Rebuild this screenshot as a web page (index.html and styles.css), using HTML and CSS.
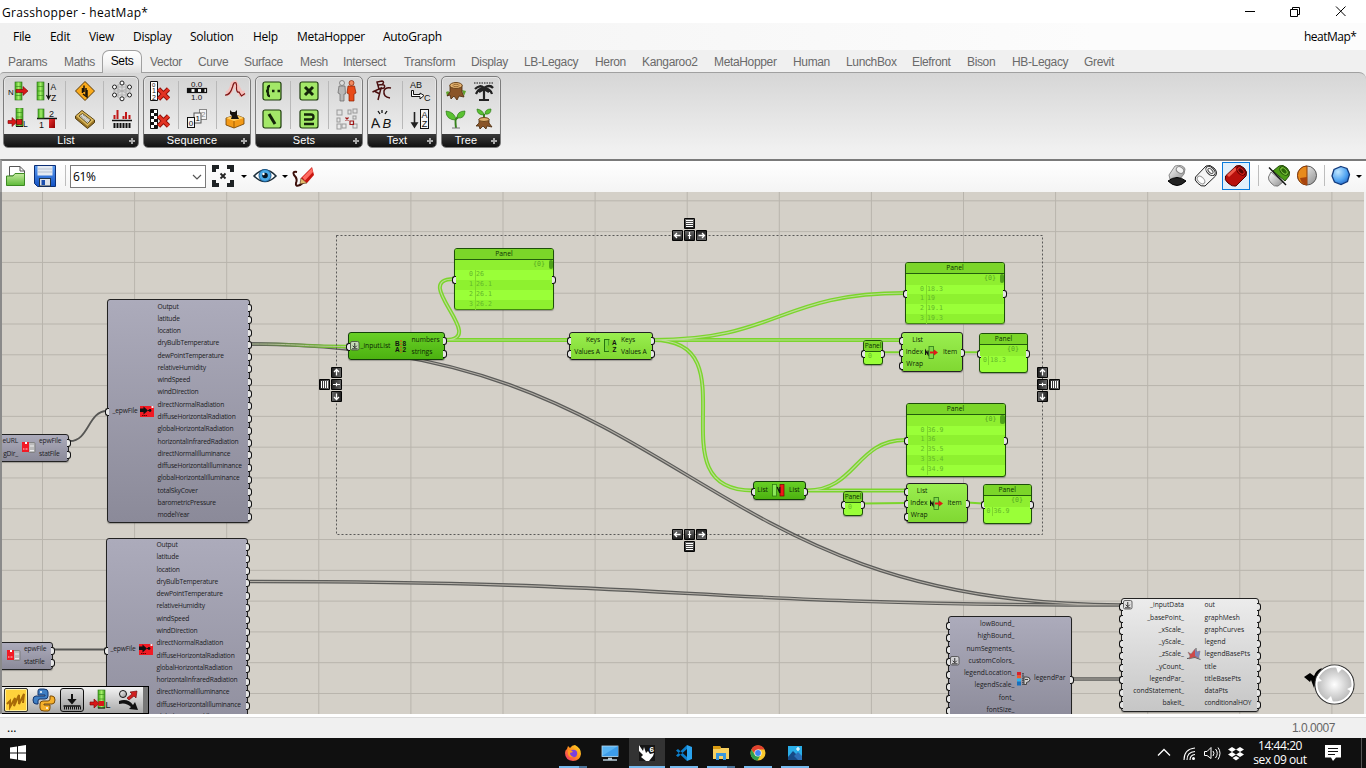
FILE: index.html
```html
<!DOCTYPE html>
<html lang="en">
<head>
<meta charset="utf-8">
<title>Grasshopper - heatMap*</title>
<link rel="stylesheet" href="styles.css">
</head>
<body>
<svg class="defs" width="0" height="0">
  <defs>
    <linearGradient id="gGreen" x1="0" x2="1"><stop offset="0" stop-color="#3fa81c"/><stop offset=".5" stop-color="#a5f06a"/><stop offset="1" stop-color="#3c9c1c"/></linearGradient>
    <linearGradient id="gRed" x1="0" y1="0" x2="1" y2="1"><stop offset="0" stop-color="#f03030"/><stop offset="1" stop-color="#8c0000"/></linearGradient>
    <linearGradient id="gFolder" x1="0" y1="0" x2="0" y2="1"><stop offset="0" stop-color="#c5ea9f"/><stop offset="1" stop-color="#5dba38"/></linearGradient>
    <linearGradient id="gBlue" x1="0" y1="0" x2="0" y2="1"><stop offset="0" stop-color="#5c9cf0"/><stop offset="1" stop-color="#1352c4"/></linearGradient>
    <linearGradient id="gGrey" x1="0" y1="0" x2="1" y2="1"><stop offset="0" stop-color="#fff"/><stop offset="1" stop-color="#8d8d8d"/></linearGradient>
    <linearGradient id="gFox" x1="1" y1="0" x2="0" y2="1"><stop offset="0" stop-color="#ffe226"/><stop offset=".5" stop-color="#ff8a1d"/><stop offset="1" stop-color="#f0247c"/></linearGradient>
    <radialGradient id="gBall" cx=".35" cy=".3" r=".8"><stop offset="0" stop-color="#bfe6ff"/><stop offset=".6" stop-color="#52a5f2"/><stop offset="1" stop-color="#1e60c0"/></radialGradient>
    <radialGradient id="gNav"><stop offset="0" stop-color="#fff"/><stop offset="1" stop-color="#b4b4b4"/></radialGradient>
    <linearGradient id="gKey" x1="0" y1="0" x2="0" y2="1"><stop offset="0" stop-color="#666"/><stop offset="1" stop-color="#222"/></linearGradient>
    <linearGradient id="gWire" x1="251" x2="348" gradientUnits="userSpaceOnUse"><stop offset="0" stop-color="#5c5c5a"/><stop offset="1" stop-color="#7bd52c"/></linearGradient>
    <pattern id="grid" x="42" y="15.6" width="92.1" height="30.79" patternUnits="userSpaceOnUse"><path d="M.5 0V31M0 .5H93" stroke="#b8b4ac" fill="none"/></pattern>
    <g id="key"><rect x="-5.5" y="-5.5" width="11" height="11" rx="1" fill="#050505"/><rect x="-4.5" y="-4.5" width="9" height="9" fill="url(#gKey)"/></g>
    <g id="kLeft"><use href="#key"/><path d="M3 0H-2.5M-.5-2.5L-3 0-.5 2.5" stroke="#fff" stroke-width="1.3" fill="none"/></g>
    <g id="kPlusV"><use href="#key"/><path d="M0-3.500V3.500M-1.7 0H1.7" stroke="#fff" stroke-width="1.2" fill="none"/></g>
    <g id="kBars"><use href="#key"/><path d="M-3.5-3H3.5M-3.5-1H3.5M-3.5 1H3.5M-3.5 3H3.5" stroke="#fff" fill="none"/></g>
    <g id="redx"><path d="M-5-5L5 5M5-5L-5 5" stroke="#8c0d06" stroke-width="4.6"/><path d="M-5-5L5 5M5-5L-5 5" stroke="#e23222" stroke-width="3"/></g>
    <g id="listcol"><rect x="0" y="0" width="7" height="18" fill="url(#gGreen)" stroke="#2d7317" stroke-width=".6"/><path d="M0 4.5H7M0 9H7M0 13.5H7" stroke="#3d8f1e" stroke-width=".7"/></g>
    <g id="epwRed"><rect width="14" height="11" fill="#f21a24"/><path d="M0 2.500H3.500V.500L8 4.500 3.500 8.500V6H0Z" fill="#111"/><path d="M8 4.500H9.500" stroke="#111" stroke-width="1.200"/><circle cx="10" cy="4.500" r="1.400" fill="#111"/><rect x="11.500" y="0" width="2" height="2" fill="#eee"/><path d="M2 9.500H7" stroke="#600" stroke-dasharray="1.500 .500"/></g>
    <g id="epwGrey"><rect x="6.500" y=".5" width="6.500" height="10" rx="1" fill="#bbb" stroke="#777" stroke-width=".8"/><path d="M8 4H12M8 8.500H12" stroke="#eee"/><rect width="7" height="10" fill="#f21a24"/><rect x="3" y="0" width="2" height="2" fill="#fff"/><path d="M1 7H6" stroke="#fff" stroke-width=".8" stroke-dasharray="1 .500"/></g>
    <g id="graft"><rect x=".5" y=".5" width="8.5" height="8.5" rx="1.5" fill="#ddd" fill-opacity=".8" stroke="#444" stroke-width=".8"/><path d="M4.75 2V6.5M2.7 4.7L4.75 6.8 6.8 4.7M2 7.8H7.5" fill="none" stroke="#222" stroke-width=".9"/></g>
    <g id="nodeItem"><rect x="4" y=".5" width="4.500" height="12" fill="#7fd84a" stroke="#2f7a18" stroke-width=".8"/><path d="M.5 9V4.500L3 8.500V4.500" fill="none" stroke="#111" stroke-width="1.200"/><path d="M5 5.500H9V3.500L13 6.500 9 9.500V7.500H5Z" fill="#e01818"/></g>
  </defs>
</svg>

<header class="titlebar">
  <span>Grasshopper - heatMap*</span>
  <svg class="caption" width="110" height="22" viewBox="0 0 110 22" fill="none" stroke="#000"><path d="M5 10.500H15M50.500 8.500H57.500V15.500H50.500ZM52.500 8V6.500H59.500V13.500H58M96 5.500L105.500 15M105.500 5.500L96 15"/></svg>
</header>

<nav class="menubar">
  <span>File</span><span>Edit</span><span>View</span><span>Display</span><span>Solution</span><span>Help</span><span>MetaHopper</span><span>AutoGraph</span><span class="doc">heatMap*</span>
</nav>

<nav class="tabs">
  <span>Params</span><span>Maths</span><span class="active">Sets</span><span>Vector</span><span>Curve</span><span>Surface</span><span>Mesh</span><span>Intersect</span><span>Transform</span><span>Display</span><span>LB-Legacy</span><span>Heron</span><span>Kangaroo2</span><span>MetaHopper</span><span>Human</span><span>LunchBox</span><span>Elefront</span><span>Bison</span><span>HB-Legacy</span><span>Grevit</span>
</nav>

<section class="ribbon">
  <div class="group list">
    <div class="tools">
      <svg viewBox="0 0 22 22"><use href="#listcol" x="8" y="2"/><text x="1" y="15" font-size="8">N</text><path d="M9 9.500H16V6.500L21 11 16 15.500V12.500H9Z" fill="#d81818" stroke="#700" stroke-width=".6"/></svg>
      <svg viewBox="0 0 22 22"><use href="#listcol" x="1" y="2"/><path d="M12.500 3V18M10.500 15L12.500 19 14.500 15" stroke="#111" fill="none" stroke-width="1.200"/><text x="14.500" y="9.500" font-size="8.500">A</text><text x="15" y="20.500" font-size="8.500">Z</text></svg>
      <svg viewBox="0 0 22 22"><path d="M11 1.500L20.500 11 11 20.500 1.500 11Z" fill="#fbab1c" stroke="#5a3a08" stroke-linejoin="round"/><path d="M10 5.500V12M8.500 8V13M9 14L13 17V10M12 8V15" stroke="#1a1206" stroke-width="1.500" fill="none"/></svg>
      <svg viewBox="0 0 22 22" class="net"><path d="M11 3L19 7V15L11 19 3 15V7ZM3 7L19 15M3 15L19 7M11 3V19M3 7H19M3 15H19M7 5V17M15 5V17M3 11H19"/><circle cx="11" cy="3" r="2"/><circle cx="18.500" cy="7" r="2"/><circle cx="18.500" cy="15" r="2"/><circle cx="11" cy="18.800" r="2"/><circle cx="3.500" cy="15" r="2"/><circle cx="3.500" cy="7" r="2"/></svg>
      <svg viewBox="0 0 22 22"><use href="#listcol" x="9" y="0"/><path d="M1 12.500H5V9.500L10 14 5 18.500V15.500H1Z" fill="#d81818" stroke="#700" stroke-width=".6"/><rect x="9.500" y="11.500" width="5.500" height="5" fill="#d81818" stroke="#500" stroke-width=".6"/><path d="M9 18.500H16" stroke="#111"/><text x="16" y="19" font-size="8.500">L</text></svg>
      <svg viewBox="0 0 22 22"><path d="M1 10.500H21" stroke="#111" stroke-width="1.400"/><rect x="2" y="1" width="6" height="9" fill="url(#gGreen)" stroke="#2d7317" stroke-width=".6"/><rect x="13" y="11" width="6" height="9" fill="url(#gRed)"/><text x="13" y="9" font-size="9">2</text><text x="3" y="20" font-size="9">1</text></svg>
      <svg viewBox="0 0 22 22"><path d="M1.500 8L8 2.500 20.500 12V14.500L13.500 20.500 1.500 10.500Z" fill="#9a7526" stroke="#4d380d"/><path d="M2 8L8 3 20 12 13.500 18Z" fill="#d8b65a"/><path d="M5 8L8.500 5.500 17 12 13.500 15.500Z" fill="#d9d9d0" stroke="#4d380d" stroke-width=".8"/><path d="M7 8L14 14M9 7L16 13" stroke="#888" stroke-dasharray="1 1"/></svg>
      <svg viewBox="0 0 22 22"><path d="M3.500 11V7M6.500 11V2M12.500 11V8M15 11V4M18.500 11V7" stroke="#c01818" stroke-width="2"/><path d="M1 12.500H21" stroke="#111" stroke-width="1.300"/><path d="M2.500 17.500H20" stroke="#111" stroke-width="5" stroke-dasharray="2 1"/></svg>
    </div>
    <h3>List</h3>
  </div>
  <div class="group sequence">
    <div class="tools">
      <svg viewBox="0 0 22 22"><path d="M1.500 1.500H8.500V20.500H1.500Z" fill="#fff" stroke="#111"/><text x="3" y="6.500" font-size="6">0</text><text x="3" y="13" font-size="7">1</text><text x="3" y="19.500" font-size="7">2</text><use href="#redx" x="14.500" y="14"/></svg>
      <svg viewBox="0 0 22 22"><text x="5" y="6.500" font-size="8">0.0</text><text x="5" y="20" font-size="8">1.0</text><rect x="1.500" y="8.500" width="19" height="4" fill="#fff" stroke="#111" stroke-width="1.200"/><path d="M2 10.500H20" stroke="#111" stroke-width="3" stroke-dasharray="3.500 3"/></svg>
      <svg viewBox="0 0 22 22"><path d="M2 14Q7 13 9 4L11 3 17 14 21 13" stroke="#f4c0bc" stroke-width="5" fill="none"/><path d="M1 15Q6 15.500 8.500 7Q10 1 12 3Q13 5 12.500 9Q13 13 15 12L17.500 16 21 13.500" stroke="#7c1414" stroke-width="1.200" fill="none"/></svg>
      <svg viewBox="0 0 22 22"><path d="M1.500 1.500H8.500V20.500H1.500Z" fill="#fff" stroke="#111"/><path d="M3.500 2V20" stroke="#111" stroke-width="3" stroke-dasharray="3 3"/><path d="M6.500 5V20" stroke="#111" stroke-width="3" stroke-dasharray="3 3"/><use href="#redx" x="14.500" y="13"/></svg>
      <svg viewBox="0 0 22 22"><g fill="#f4f4f4" stroke="#111"><rect x="13.500" y="1.500" width="7" height="10" stroke="#888"/><rect x="8" y="5" width="7" height="10" stroke="#555"/><rect x="1.500" y="9.500" width="7" height="10"/></g><text x="15" y="9" font-size="8" class="dim">2</text><text x="9.500" y="13" font-size="8">1</text><text x="2.800" y="18" font-size="8">0</text></svg>
      <svg viewBox="0 0 22 22"><path d="M2 10L12 7 20 10V16L10 20 2 17Z" fill="#f39a18" stroke="#6a3c00" stroke-width=".8"/><path d="M2 10L10 13 20 10 12 7Z" fill="#ffce62"/><path d="M10 13V20" stroke="#a35e00"/><path d="M6 2L8 4H11L13 2 13 7 15 11 7 11 8 8 6 6Z" fill="#16120e"/></svg>
    </div>
    <h3>Sequence</h3>
  </div>
  <div class="group sets">
    <div class="tools">
      <svg viewBox="0 0 22 22" class="tile"><rect x="2" y="2" width="18" height="18" rx="2"/><path d="M9 6Q6.500 6 7 9Q7 11 5 11Q7 11 7 13Q6.500 16 9 16"/><path d="M11 11H13.500M16.500 11H19" /></svg>
      <svg viewBox="0 0 22 22" class="tile"><rect x="2" y="2" width="18" height="18" rx="2"/><path d="M7 7L15 15M15 7L7 15" class="fat"/></svg>
      <svg viewBox="0 0 22 22"><g stroke-width=".7"><path d="M3 6H9L9.500 14 8 14V21H4V14L2 13Z" fill="#b8b8b8" stroke="#666"/><circle cx="6" cy="3" r="2.500" fill="#ddd" stroke="#666"/><path d="M12 6H18.500L20 13 18 14V21H13V14L11 13Z" fill="#e84a18" stroke="#8a2000"/><circle cx="15.500" cy="3" r="2.500" fill="#f08a60" stroke="#8a2000"/></g></svg>
      <svg viewBox="0 0 22 22" class="tile"><rect x="2" y="2" width="18" height="18" rx="2"/><path d="M8 6L14 16" class="fat"/></svg>
      <svg viewBox="0 0 22 22" class="tile"><rect x="2" y="2" width="18" height="18" rx="2"/><path d="M6 6.500H13Q15.500 6.500 15.500 9Q15.500 11.500 13 11.500H6M6 16H16"/></svg>
      <svg viewBox="0 0 22 22" class="boxes"><rect x="1" y="2" width="5" height="5"/><rect x="12" y="2" width="3" height="4"/><rect x="17" y="1" width="4" height="4"/><rect x="1" y="10" width="3" height="4"/><rect x="17" y="8" width="3" height="3"/><rect x="1" y="16" width="4" height="5"/><rect x="6" y="16" width="4" height="4"/><rect x="17" y="16" width="4" height="4"/><path d="M9.500 9.500L12.500 12.500M12.500 9.500L9.500 12.500M14 13H17.500V16.500H14Z" stroke="#a01818" stroke-width="1.200"/></svg>
    </div>
    <h3>Sets</h3>
  </div>
  <div class="group text">
    <div class="tools">
      <svg viewBox="0 0 22 22"><g stroke="#4a1010" stroke-width="1.500" fill="none"><path d="M8 9L6 2L11 1Q14 2 11 4.500L7.500 5M11 4.500Q15 5 13 8L8 9"/><path d="M1.500 12L10 8 7 20M4 11.500L9 14"/><path d="M20 8Q14 7 13 11Q12 17 19 18"/></g></svg>
      <svg viewBox="0 0 22 22"><text x="1" y="8" font-size="9">AB</text><path d="M2.500 10.500V16.500H11V19L15 15.500 11 13V14.500H4.500V10.500Z" fill="#fff" stroke="#111"/><text x="15" y="20.500" font-size="9">C</text></svg>
      <svg viewBox="0 0 22 22"><text x="0" y="20" font-size="14" transform="rotate(-4 3 20)">A</text><text x="11.500" y="20" font-size="13" font-style="italic">B</text><path d="M7 3L9 6M11 2V5M16 3L14 6" stroke="#111" stroke-width="1.300"/></svg>
      <svg viewBox="0 0 22 22"><path d="M5.500 4V18M3 15L5.500 19 8 15Z" stroke="#222" stroke-width="1.600"/><rect x="11.500" y="1.500" width="8" height="19" fill="#f6f6f6" stroke="#111"/><text x="12.500" y="10" font-size="9">A</text><text x="12.800" y="19" font-size="9">Z</text></svg>
    </div>
    <h3>Text</h3>
  </div>
  <div class="group tree">
    <div class="tools">
      <svg viewBox="0 0 22 22"><path d="M1 12Q4 10 5 13L2 16ZM17 10L21 11 19 16Z" fill="#5fa32c"/><path d="M5 5V12L2 16 5 15 6 19 9 16 12 20 14 16 19 17 17 12V5Z" fill="#8a5528" stroke="#4a2b0c" stroke-width=".8"/><ellipse cx="11" cy="5.500" rx="6.200" ry="3" fill="#e0b06e" stroke="#6d451b"/><ellipse cx="11" cy="5.500" rx="3" ry="1.200" fill="none" stroke="#9c6d35"/></svg>
      <svg viewBox="0 0 22 22"><path d="M1 3H21" stroke="#111" stroke-dasharray="1.500 1"/><path d="M11 7V19M6 20H16M2 9Q7 4 11 8Q17 4 20 8M3 14Q6 7 11 9Q17 8 19 14M6 12L11 9 16 12" stroke="#222" stroke-width="2.200" fill="none"/></svg>
      <svg viewBox="0 0 22 22"><path d="M11 20Q10 12 11 11L16 6" stroke="#37831c" stroke-width="2" fill="none"/><path d="M11 12Q1 12 1 3Q10 4 11 12ZM12 10Q12 3 20 3Q20 11 12 10Z" fill="#5ac232" stroke="#2c7a15" stroke-width=".7"/><path d="M7 20H15" stroke="#777"/></svg>
      <svg viewBox="0 0 22 22"><path d="M11 12V6" stroke="#37831c" stroke-width="2"/><path d="M11 7Q4 7 4 1Q10 2 11 7ZM12 6Q12 1 18 1Q18 7 12 6Z" fill="#5ac232" stroke="#2c7a15" stroke-width=".7"/><path d="M6 11V15L3 18 6 18 7 21 10 18 13 21 14 18 19 19 16 15V11Z" fill="#8a5528" stroke="#4a2b0c" stroke-width=".8"/><ellipse cx="11" cy="11.500" rx="5" ry="2" fill="#e0b06e" stroke="#6d451b"/></svg>
    </div>
    <h3>Tree</h3>
  </div>
</section>

<section class="toolbar">
  <svg class="open" width="24" height="26" viewBox="0 0 24 26"><path d="M6.500 13V3.500H17L21.500 8V13Z" fill="#fff" stroke="#555"/><path d="M17 3.500V8H21.500" fill="none" stroke="#555"/><path d="M3.500 22.500V13H10L12 10.500H21.500V22.500Z" fill="url(#gFolder)" stroke="#3c8a22"/></svg>
  <svg width="30" height="26" viewBox="0 0 30 26"><path d="M4.500 2.500H25.500V23.500H7.500L4.500 20.500Z" fill="url(#gBlue)" stroke="#0c2e74"/><rect x="7.500" y="3" width="15" height="9.500" fill="#e4eaf2"/><path d="M8 6H22M8 9H22" stroke="#b6c0cf"/><rect x="9.500" y="15.500" width="11" height="7.500" fill="#dfe3ea" stroke="#234"/><rect x="11.500" y="17" width="3.500" height="5" fill="#1c4fae"/></svg>
  <i class="sep"></i>
  <div class="combo"><span>61%</span><svg width="12" height="8" viewBox="0 0 12 8"><path d="M2 2L6 6 10 2" fill="none" stroke="#555" stroke-width="1.200"/></svg></div>
  <svg width="26" height="26" viewBox="0 0 26 26"><path d="M4 9V4H9M17 4H22V9M22 17V22H17M9 22H4V17" stroke="#1e2224" stroke-width="4" fill="none"/><path d="M10.500 10.500L15.500 15.500M15.500 10.500L10.500 15.500" stroke="#222" stroke-width="1.800"/></svg>
  <i class="drop"></i>
  <svg width="28" height="26" viewBox="0 0 28 26"><path d="M3 13Q14 1 25 13Q14 24 3 13Z" fill="#fff" stroke="#1c2e3a" stroke-width="1.600"/><circle cx="14" cy="12.500" r="6" fill="#4aa9e6" stroke="#185a90"/><circle cx="14" cy="12.500" r="2.800" fill="#06131f"/><circle cx="12.500" cy="11" r="1.200" fill="#fff"/></svg>
  <i class="drop narrow"></i>
  <svg width="30" height="26" viewBox="0 0 30 26"><path d="M6 9Q1 8 3 12Q7 16 5 20Q4 24 9 22L13 19" fill="none" stroke="#3c0f0a" stroke-width="2"/><path d="M9 21L10 15 16 20Z" fill="#e3bb6c" stroke="#4b2a10" stroke-width=".6"/><path d="M10 15L21 4 23 12 16 20Z" fill="#c8150f"/><path d="M11.500 14.500L21 5 22 9 14 17.500Z" fill="#ff6a60"/></svg>
  <div class="right">
    <svg width="26" height="26" viewBox="0 0 26 26"><path d="M5 12L11 3Q19 1 21 6L20 11 15 17 6 16Z" fill="url(#gGrey)" stroke="#888"/><ellipse cx="16" cy="7" rx="4" ry="3" transform="rotate(35 16 7)" fill="#f4f4f4" stroke="#888"/><path d="M4 18Q13 11 22 18Q13 27 4 18Z" fill="#222" stroke="#000"/></svg>
    <svg width="28" height="26" viewBox="0 0 28 26"><path d="M3.500 14L14 3Q18 1 22 5Q26 9 23.500 13L13 23Q9 24 5.500 20Q2 17 3.500 14Z" fill="#f6f6f6" stroke="#222"/><ellipse cx="18.500" cy="8" rx="3.500" ry="5.500" transform="rotate(-45 18.500 8)" fill="#fff" stroke="#333"/><ellipse cx="18.500" cy="8" rx="1.700" ry="3.200" transform="rotate(-45 18.500 8)" fill="none" stroke="#555"/><ellipse cx="9" cy="17" rx="2.800" ry="4.500" transform="rotate(-45 9 17)" fill="#fff" stroke="#999"/></svg>
    <span class="on"><svg width="28" height="26" viewBox="0 0 28 26"><path d="M3.500 13L14 3Q18 1 22 5Q26 9 24 13L14 23Q10 24 6 20Q2 17 3.500 13Z" fill="#b8100c" stroke="#500"/><path d="M6 13L14 5.500" stroke="#ee5a4a" stroke-width="3"/><ellipse cx="19" cy="8" rx="3.200" ry="5" transform="rotate(-45 19 8)" fill="#d8201a" stroke="#500"/><ellipse cx="19" cy="8" rx="1.800" ry="3.200" transform="rotate(-45 19 8)" fill="#5c0402"/></svg></span>
    <i class="sep"></i>
    <svg width="28" height="26" viewBox="0 0 28 26"><path d="M6 9L3.500 14Q3 17 6 20Q9 24 13 23L18 19Z" fill="url(#gGrey)" stroke="#777"/><path d="M8 8L14 3Q18 1 22 5Q26 9 24 13L20 18Z" fill="#4c9c16" stroke="#234b0a"/><ellipse cx="19" cy="8" rx="3.200" ry="5" transform="rotate(-45 19 8)" fill="#7cc83c" stroke="#234b0a"/><ellipse cx="19" cy="8" rx="1.800" ry="3.200" transform="rotate(-45 19 8)" fill="#2c660a"/><path d="M4 4.500L21 22" stroke="#111" stroke-width="1.400"/></svg>
    <svg width="28" height="26" viewBox="0 0 28 26"><circle cx="14" cy="12.500" r="9.500" fill="url(#gGrey)" stroke="#555"/><path d="M14 3A9.500 9.500 0 0 0 14 22Z" fill="#e88a1c" stroke="#8a3a08"/><path d="M7 15Q8 21 14 22V14Z" fill="#a8440c"/></svg>
    <i class="sep"></i>
    <svg width="28" height="26" viewBox="0 0 28 26"><path d="M14 3.500L20 5.500 22.500 11.500 20.500 18.500 14 21.500 7.500 19 5 13 7 6.500Z" fill="url(#gBall)" stroke="#123a7c" stroke-width="1.300"/></svg>
    <i class="drop"></i>
  </div>
</section>

<main class="canvas">
  <div class="world">
    <svg class="wires" width="1366" height="768" viewBox="0 0 1366 768">
      <rect width="1366" height="768" fill="url(#grid)" shape-rendering="crispEdges"/>
      <g class="wire dark">
        <path d="M251 344C686 344 686 605 1121 605M250 581.500C685 581.500 685 605 1121 605M1073 679H1121"/>
        <path class="core" d="M251 344C686 344 686 605 1121 605M250 581.500C685 581.500 685 605 1121 605M1073 679H1121"/>
      </g>
      <path d="M70 441C89 441 88 411 107 411M54 649.500H107" class="single"/>
      <path d="M251 344C300 344 300 346.500 349 346.500" stroke="url(#gWire)" stroke-width="3.500" fill="none"/>
      <path d="M251 344C300 344 300 346.500 349 346.500" stroke="#b6c49a" stroke-width="1" fill="none"/>
      <g class="wire green">
        <path d="M445 340C490 340 409 279 454 279M445 340H569M653 340C779 340 779 293 905 293M653 340H901M653 340C755 340 651 490.500 753 490.500M807 490.500C856 490.500 856 440 905 440M807 490.500H905"/>
        <path class="core" d="M445 340C490 340 409 279 454 279M445 340H569M653 340C779 340 779 293 905 293M653 340H901M653 340C755 340 651 490.500 753 490.500M807 490.500C856 490.500 856 440 905 440M807 490.500H905"/>
        <path class="one" d="M864 503.500L905 503M884 352.300H901M963 352.300H979M967 502.500L983 503.500"/>
      </g>
    </svg>

    <article class="node grey n-epw1"><ul class="ins"><li>_epwFile</li></ul><svg class="ico" width="14" height="11"><use href="#epwRed"/></svg><ul class="outs"><li>Output</li><li>latitude</li><li>location</li><li>dryBulbTemperature</li><li>dewPointTemperature</li><li>relativeHumidity</li><li>windSpeed</li><li>windDirection</li><li>directNormalRadiation</li><li>diffuseHorizontalRadiation</li><li>globalHorizontalRadiation</li><li>horizontalInfraredRadiation</li><li>directNormalIlluminance</li><li>diffuseHorizontalIlluminance</li><li>globalHorizontalIlluminance</li><li>totalSkyCover</li><li>barometricPressure</li><li>modelYear</li></ul></article>
    <article class="node grey n-epw2"><ul class="ins"><li>_epwFile</li></ul><svg class="ico" width="14" height="11"><use href="#epwRed"/></svg><ul class="outs"><li>Output</li><li>latitude</li><li>location</li><li>dryBulbTemperature</li><li>dewPointTemperature</li><li>relativeHumidity</li><li>windSpeed</li><li>windDirection</li><li>directNormalRadiation</li><li>diffuseHorizontalRadiation</li><li>globalHorizontalRadiation</li><li>horizontalInfraredRadiation</li><li>directNormalIlluminance</li><li>diffuseHorizontalIlluminance</li><li>globalHorizontalIlluminance</li><li>totalSkyCover</li><li>barometricPressure</li><li>modelYear</li></ul></article>
    <article class="node grey n-url1"><ul class="ins"><li>eURL</li><li>gDir_</li></ul><svg class="ico" width="14" height="11"><use href="#epwGrey"/></svg><ul class="outs"><li>epwFile</li><li>statFile</li></ul></article>
    <article class="node grey n-url2"><ul class="ins"><li></li><li></li></ul><svg class="ico" width="14" height="11"><use href="#epwGrey"/></svg><ul class="outs"><li>epwFile</li><li>statFile</li></ul></article>
    <article class="node legend n-legend"><ul class="ins"><li>lowBound_</li><li>highBound_</li><li>numSegments_</li><li>customColors_<svg class="graft" width="10" height="10"><use href="#graft"/></svg></li><li>legendLocation_</li><li>legendScale_</li><li>font_</li><li>fontSize_</li></ul><svg class="ico" width="14" height="14"><path d="M0 0H4V3.500H0Z" fill="#d8202c"/><path d="M0 3.500H4V6.500H0Z" fill="#f05a28"/><path d="M0 6.500H4V9.500H0Z" fill="#2ab4f0"/><path d="M0 9.500H4V13.500H0Z" fill="#1470c0"/><path d="M6 1V13" stroke="#333" stroke-width="1.300" stroke-dasharray="1.500 .700"/><path d="M7 5H10Q13 5 13 7.500Q13 10 9.500 10.500V12.500H7Z" stroke="#444" fill="#ccc"/><path d="M8 7.500H11" stroke="#444"/></svg><ul class="outs"><li>legendPar</li></ul></article>
    <article class="node white n-graph"><ul class="ins"><li>_inputData<svg class="graft" width="10" height="10"><use href="#graft"/></svg></li><li>_basePoint_</li><li>_xScale_</li><li>_yScale_</li><li>_zScale_</li><li>_yCount_</li><li>legendPar_</li><li>condStatement_</li><li>bakeIt_</li></ul><svg class="ico" width="14" height="13"><path d="M0 10.500L8 9.500 13.500 11.500M9 0V8" stroke="#555" fill="none"/><path d="M1 4L4 6 8 1 10 4 13 3 12 8 12 10 7 9 2 11 3 8Z" fill="#d04848" stroke="#777" stroke-width=".5"/><path d="M8 1L10 4 13 3 12 8 12 10 8 8Z" fill="#7c86b8"/></svg><ul class="outs"><li>out</li><li>graphMesh</li><li>graphCurves</li><li>legend</li><li>legendBasePts</li><li>title</li><li>titleBasePts</li><li>dataPts</li><li>conditionalHOY</li></ul></article>
    <article class="node deep n-input"><ul class="ins"><li>_inputList<svg class="graft" width="10" height="10"><use href="#graft"/></svg></li></ul><svg class="ico bold" width="13" height="13"><text x="0" y="5.800" font-size="6.500">B</text><text x="7.500" y="5.800" font-size="6.500">8</text><text x="0" y="12" font-size="6.500">A</text><text x="7.500" y="12" font-size="6.500">2</text><path d="M6 0V13" stroke="#e04a10" stroke-dasharray="2 1"/></svg><ul class="outs"><li>numbers</li><li>strings</li></ul></article>
    <article class="node green n-sort"><ul class="ins"><li>Keys</li><li>Values A</li></ul><svg class="ico bold" width="13" height="14"><rect x=".5" y=".5" width="4.500" height="12" fill="#79dc42" stroke="#28730e"/><path d="M7 1V10" stroke="#113c06"/><path d="M5 8.500H9L7 12Z" fill="#111"/><text x="8" y="6" font-size="6.500">A</text><text x="8.500" y="13" font-size="6.500">Z</text></svg><ul class="outs"><li>Keys</li><li>Values A</li></ul></article>
    <article class="node green n-item1"><ul class="ins"><li>List</li><li>Index</li><li>Wrap</li></ul><svg class="ico" width="13" height="13"><use href="#nodeItem"/></svg><ul class="outs"><li>Item</li></ul></article>
    <article class="node green n-item2"><ul class="ins"><li>List</li><li>Index</li><li>Wrap</li></ul><svg class="ico" width="13" height="13"><use href="#nodeItem"/></svg><ul class="outs"><li>Item</li></ul></article>
    <article class="node deep n-rev"><ul class="ins"><li>List</li></ul><svg class="ico" width="13" height="13"><rect x=".5" y=".5" width="4" height="11.500" fill="#8be858" stroke="#28730e" stroke-width=".7"/><rect x="8" y=".5" width="4" height="11.500" fill="#f01818" stroke="#700" stroke-width=".7"/><path d="M5.200 3L7.800 9V3" fill="none" stroke="#111" stroke-width="1.200"/></svg><ul class="outs"><li>List</li></ul></article>

    <article class="panel p-1"><h4>Panel</h4><div class="path">{0}</div><ol><li><b>0</b>26</li><li><b>1</b>26.1</li><li><b>2</b>26.1</li><li><b>3</b>26.2</li></ol></article>
    <article class="panel p-2"><h4>Panel</h4><div class="path">{0}</div><ol><li><b>0</b>18.3</li><li><b>1</b>19</li><li><b>2</b>19.1</li><li><b>3</b>19.3</li></ol></article>
    <article class="panel p-3"><h4>Panel</h4><div class="path">{0}</div><ol><li><b>0</b>36.9</li><li><b>1</b>36</li><li><b>2</b>35.5</li><li><b>3</b>35.4</li><li><b>4</b>34.9</li></ol></article>
    <article class="panel short p-4"><h4>Panel</h4><div class="path">{0}</div><ol><li><b>0</b>18.3</li></ol></article>
    <article class="panel short p-5"><h4>Panel</h4><div class="path">{0}</div><ol><li><b>0</b>36.9</li></ol></article>
    <article class="panel mini p-6"><h4>Panel</h4><p>0</p></article>
    <article class="panel mini p-7"><h4>Panel</h4><p>0</p></article>

    <svg class="overlay" width="1366" height="768" viewBox="0 0 1366 768">
      <rect x="336.500" y="235.500" width="706" height="299" fill="none" stroke="#444" stroke-width="1" stroke-dasharray="2 2" stroke-opacity=".85"/>
      <use href="#kBars" x="689.500" y="223.500"/><use href="#kLeft" x="677.500" y="235.500"/><use href="#kPlusV" x="689.500" y="235.500"/><use href="#kLeft" transform="translate(701.500 235.500) rotate(180)"/>
      <use href="#kBars" x="689.500" y="546.500"/><use href="#kLeft" x="677.500" y="534.500"/><use href="#kPlusV" x="689.500" y="534.500"/><use href="#kLeft" transform="translate(701.500 534.500) rotate(180)"/>
      <use href="#kLeft" transform="translate(336.500 372.500) rotate(90)"/><use href="#kPlusV" transform="translate(336.500 384.500) rotate(90)"/><use href="#kLeft" transform="translate(336.500 396.500) rotate(-90)"/><use href="#kBars" transform="translate(324.500 384.500) rotate(90)"/>
      <use href="#kLeft" transform="translate(1042.500 372.500) rotate(90)"/><use href="#kPlusV" transform="translate(1042.500 384.500) rotate(90)"/><use href="#kLeft" transform="translate(1042.500 396.500) rotate(-90)"/><use href="#kBars" transform="translate(1054.500 384.500) rotate(90)"/>
      <g><path d="M1304 677L1310 673 1314 676Q1316 670 1322 668L1318 676 1314 688 1311 680 1310 682Z" fill="#000"/><circle cx="1334.500" cy="684.500" r="19.500" fill="url(#gNav)" stroke="#333" stroke-width="1.200"/><circle cx="1334.500" cy="684.500" r="18" fill="none" stroke="#fff" stroke-width="2"/><path d="M1336 667L1342 669 1338 673ZM1353 686L1352 692 1347 689ZM1333 702L1327 700 1331 696ZM1316 682L1317 676 1322 681Z" fill="#fff"/></g>
    </svg>

    <div class="mru">
      <span class="yellow"><svg width="22" height="22"><path d="M2 15L5 12 5 18 10 9 9 17 14 6 14 15 19 5 18 14" fill="none" stroke="#a86a08" stroke-width="2"/></svg></span>
      <span><svg width="24" height="24"><path d="M12 1H8Q6 1 6 3V7H13V8H4Q1 8 1 12Q1 16 4 16H6V13Q6 11 8 11H13Q16 11 16 8V4Q16 1 12 1Z" fill="#3f7fc4" stroke="#14346a"/><path d="M12 23H16Q18 23 18 20V17H12V16H20Q23 16 23 12Q23 8 20 8H18V11Q18 13 16 13H11Q8 13 8 16V20Q8 23 12 23Z" fill="#f6b12c" stroke="#7a4c08"/><circle cx="9" cy="4" r="1" fill="#fff"/><circle cx="15" cy="20" r="1" fill="#fff"/></svg></span>
      <span class="press"><svg width="22" height="22"><path d="M11 5V13M8.500 11L11 14 13.500 11Z" stroke="#111" stroke-width="2"/><path d="M2.500 17H19.500" stroke="#111" stroke-width="1.500"/><path d="M3 19H20" stroke="#111" stroke-width="3" stroke-dasharray="1 1"/></svg></span>
      <span><svg width="24" height="24"><use href="#listcol" x="10" y="2"/><path d="M2 14H6V11L11 15.500 6 20V17H2Z" fill="#d81818" stroke="#700" stroke-width=".6"/><rect x="10.500" y="13" width="5.500" height="5" fill="#d81818"/><path d="M10 20H17" stroke="#111"/><text x="17.500" y="20" font-size="9">L</text></svg></span>
      <span><svg width="24" height="24"><circle cx="7" cy="6" r="3.500" fill="url(#gGrey)" stroke="#111"/><path d="M11 10L16 6 14 4 21 3 20 10 18 8 13 12Z" fill="#d02020" stroke="#600" stroke-width=".6"/><path d="M3 13Q12 10 17 17L19 14 22 22 13 21 15 19Q10 14 3 16Z" fill="#111"/></svg></span>
    </div>
  </div>
</main>

<footer class="status"><span>...</span><span class="ver">1.0.0007</span></footer>

<footer class="taskbar">
  <svg class="start" width="18" height="18" viewBox="0 0 18 18"><path d="M1 3.500L8 2.500V8.500H1ZM9 2.300L17 1V8.500H9ZM1 9.500H8V15.500L1 14.500ZM9 9.500H17V17L9 15.700Z" fill="#fff"/></svg>
  <div class="apps">
    <span class="run two"><svg viewBox="0 0 18 18"><path d="M4 2L6 4Q8 1 11 1Q17 4 17 10Q16 17 9 17Q1 16 1 9Q1 6 3 5Z" fill="url(#gFox)"/><circle cx="9.500" cy="9.500" r="3.700" fill="#7a3fe0"/><path d="M4 6Q8 6 9 8L6 9Q6 12 10 13Q5 14 4 10Z" fill="#ff9a20"/></svg></span>
    <span><svg viewBox="0 0 18 18"><rect x="1" y="2" width="16" height="10.500" fill="#58b4f4" stroke="#b8dcf4" stroke-width=".8"/><path d="M1 12L17 2V12Z" fill="#3c9cea"/><path d="M7 14.500H11M2 16H16" stroke="#b8ccd8" stroke-width="1.500"/></svg></span>
    <span class="run current"><svg viewBox="0 0 18 18"><rect x="1" y="1" width="16" height="16" fill="#151515"/><path d="M1 1L5 7 6 3 8 9 10 7 12 10 16 9 15 12 11 17H8L3 13 5 11 1 7Z" fill="#fff"/><text x="11.500" y="8" font-size="8" class="inv">6</text></svg></span>
    <span class="run"><svg viewBox="0 0 18 18"><path d="M12 1L17 3V15L12 17Z" fill="#2aa3ee"/><path d="M12 1V5L3 13 1 11.500 12 1ZM12 17V13L3 5 1 6.500Z" fill="#0c7fcb"/></svg></span>
    <span class="run two"><svg viewBox="0 0 18 18"><path d="M1 2H8L9 4H17V15H1Z" fill="#f8d060"/><path d="M1 2H8L9 4 8 5H1Z" fill="#d99a10"/><path d="M4 16V9H14V16H11V12H7V16Z" fill="#3a96dc"/></svg></span>
    <span class="run"><svg viewBox="0 0 18 18"><circle cx="9" cy="9" r="7.500" fill="#f8c92e"/><path d="M2.300 5.500A7.500 7.500 0 0 1 15.700 5.500H9L6 10Z" fill="#e2412e"/><path d="M2.300 5.500A7.500 7.500 0 0 0 8.500 16.500L11.500 11H6Z" fill="#2e9e4f"/><circle cx="9" cy="9" r="3.600" fill="#fff"/><circle cx="9" cy="9" r="2.900" fill="#4285f4"/></svg></span>
    <span class="run"><svg viewBox="0 0 18 18"><rect x="2" y="2" width="14" height="14" fill="#2aaee8"/><path d="M2 13L7 7 16 16H2Z" fill="#174a86"/><path d="M8 12L12 8 16 12V16H12Z" fill="#2c6fb8"/><path d="M12 3V7M10 5H14" stroke="#fff" stroke-width="1.200"/></svg></span>
  </div>
  <div class="tray">
    <svg width="90" height="30" viewBox="0 0 90 30" fill="none" stroke="#fff"><path d="M3 17.500L9 11.500 15 17.500" stroke-width="1.300"/><path d="M29 22Q29 11 40 10M32 22Q32 14 40 13.500M35 22Q35 17 40 16.500" stroke-width="1.100"/><circle cx="38.500" cy="20.500" r="1.500" fill="#fff" stroke="none"/><path d="M49.500 13.500H52L56 9.500V20.500L52 17.500H49.500ZM58 13Q60 15 58 18M60.500 11Q64 15 60.500 20M63 9.500Q67 15 63 21.500"/><path d="M77 9L81 11.500 77 14 73 11.500ZM85 9L89 11.500 85 14 81 11.500ZM77 14L81 16.500 77 19 73 16.500ZM85 14L89 16.500 85 19 81 16.500ZM81 18L84.500 20 81 22.500 77.500 20Z" fill="#fff" stroke="none"/></svg>
    <div class="clock"><span>14:44:20</span><span>sex 09 out</span></div>
    <svg class="note" width="18" height="18" viewBox="0 0 18 18"><path d="M1 1H17V13.500H12L9 17 7 13.500H1Z" fill="#fff"/><path d="M4 4.500H14M4 7.500H14M4 10.500H11" stroke="#111" stroke-width="1.100"/></svg>
    <i class="peek"></i>
  </div>
</footer>
</body>
</html>
```
FILE: styles.css
```css
* { box-sizing: border-box; }
body {
  margin: 0; width: 1366px; height: 768px; overflow: hidden;
  display: flex; flex-direction: column;
  background: #f0f0f0; color: #000;
  font: 12px/1 "Open Sans", "Noto Sans", sans-serif;
}
svg { display: block; flex: none; }
svg text { font-family: "Liberation Sans", Arial, sans-serif; fill: #111; }
ul, ol, h3, h4, p { margin: 0; padding: 0; list-style: none; font-weight: normal; }
.defs { position: absolute; }

.titlebar { height: 23px; flex: none; background: #fff; display: flex; align-items: center; justify-content: space-between; padding: 0 17px 0 2px; letter-spacing: .32px; }
.caption { margin-right: -1px; }
.titlebar span { padding-top: 2px; }

.menubar {
  height: 27px; flex: none; display: grid; align-items: center; padding-left: 13px; letter-spacing: -.3px;
  grid-template-columns: 37px 39px 44px 57px 63px 44px 86px 921px 60px;
  background: linear-gradient(90deg, #f0f0f0, #fcfcfc 80%);
}
.menubar .doc { white-space: nowrap; letter-spacing: -.5px; }

.tabs {
  height: 22px; flex: none; display: grid; padding-left: 8px; line-height: 24px; color: #6a6a6a; white-space: nowrap;
  font-family: "Liberation Sans", Arial, sans-serif; font-size: 12px; letter-spacing: -.35px;
  grid-template-columns: 56px 38px 48px 48px 46px 56px 43px 61px 67px 53px 71px 47px 72px 79px 53px 66px 55px 45px 72px 50px;
}
.tabs .active {
  height: 23px; width: 40px; text-align: center; line-height: 20px; color: #000; z-index: 1;
  border: 1px solid #a0a0a0; border-bottom: 0; border-radius: 7px 7px 0 0;
  background: linear-gradient(#fff, #f2f2f2 60%, #dcdcdc);
}

.ribbon {
  height: 87px; flex: none; display: flex; align-items: flex-start; gap: 4px; padding: 3px 0 0 3px;
  border-top: 1px solid #a0a0a0; border-radius: 4px 7px 0 0;
  background: linear-gradient(#d6d6d6, #f0f0f0 76px);
}
.group { height: 72px; border: 1px solid #7c7c7c; border-radius: 5px; background: linear-gradient(#d4d4d4, #ededed 58px); overflow: hidden; display: flex; flex-direction: column; box-shadow: inset 0 0 0 1px #e6e6e6; }
.group.list { width: 136px; }
.group.sequence, .group.sets { width: 108px; }
.group.text { width: 70px; }
.group.tree { width: 60px; }
.tools { flex: 1; display: grid; grid-template-rows: 28px 28px; padding: 1px 0 0 3px; grid-template-columns: repeat(3, 37.500px); }
.tools svg { width: 22px; height: 22px; margin: 2px 0 0; }
.list .tools {
  grid-template-columns: 29px 37.500px 37.500px 29px;
  background: linear-gradient(#b8b8b8, #b8b8b8) 61px 4px / 1px 48px no-repeat, linear-gradient(#b8b8b8, #b8b8b8) 99px 4px / 1px 48px no-repeat;
}
.sequence .tools, .sets .tools { padding-left: 4.500px; background: linear-gradient(#b8b8b8, #b8b8b8) 34px 4px / 1px 48px no-repeat, linear-gradient(#b8b8b8, #b8b8b8) 72px 4px / 1px 48px no-repeat; }
.text .tools { grid-template-columns: 38px 28px; background: linear-gradient(#b8b8b8, #b8b8b8) 34px 4px / 1px 48px no-repeat; }
.tree .tools { grid-template-columns: 28px 28px; }
.group h3 {
  height: 13px; background: linear-gradient(#3a3a3a, #111); color: #fff; text-align: center; padding-right: 10px; position: relative;
  font: 11px/13px "Liberation Sans", Arial, sans-serif; letter-spacing: .1px;
}
.group h3::before, .group h3::after { content: ""; position: absolute; background: #aaa; }
.group h3::before { right: 3px; top: 6px; width: 6px; height: 2px; }
.group h3::after { right: 5px; top: 4px; width: 2px; height: 6px; }
.net path { fill: none; stroke: #aaa; stroke-width: .8; }
.net circle { fill: #fff; stroke: #222; }
.tile rect { fill: #a3e868; stroke: #1c3a0c; stroke-width: 1.200; }
.tile path { fill: none; stroke: #14250a; stroke-width: 2.300; }
.tile .fat { stroke-width: 3; }
.boxes { fill: none; stroke: #999; }
svg .dim { fill: #888; }
svg .inv { fill: #fff; font-weight: bold; }

.toolbar {
  height: 33px; flex: none; display: flex; align-items: center; padding: 0 0 2px 3px; border-top: 2px solid #7a7a7a; border-left: 2px solid #a0a0a0;
  background: linear-gradient(#fff, #f4f4f4);
}
.open { margin: 0 3px 0 -2px; }
.sep { width: 1px; height: 21px; background: #bdbdbd; flex: none; }
.toolbar > .sep { margin: 0 4px 0 5px; }
.combo { width: 136px; height: 23px; background: #fff; border: 1px solid #7a7a7a; display: flex; align-items: center; justify-content: space-between; padding: 0 2px; letter-spacing: -.3px; margin: 2px 4px 0 0; }
.drop { width: 0; height: 0; border: 3px solid transparent; border-top-color: #000; border-bottom: 0; margin: 2px 4.500px 0; flex: none; }
.drop.narrow { margin: 2px 3px 0 3px; }
.right { margin-left: auto; display: flex; align-items: center; }
.right svg { margin-right: 2px; }
.right .on { border: 1px solid #0a7bdc; background: #e2f0fb; width: 28px; height: 28px; display: flex; align-items: center; justify-content: center; }
.right .on svg { margin: 0; }
.right .sep { margin: 0 6px 0 8px; }
.right .sep + svg { margin-right: 0; }
.right svg + .sep { margin: 0 2px 0 1.500px; }
.right .drop { margin: 2px 4px 0 1px; }

.canvas { height: 522px; flex: none; position: relative; overflow: hidden; background: #d4d0c8; margin-right: 2px; border-left: 2px solid #8a8a8a; }
.world { position: absolute; left: -2px; top: -192px; width: 1366px; height: 768px; }
.wires, .overlay { position: absolute; left: 0; top: 0; }
.wire path { fill: none; stroke-width: 3.600; }
.dark path { stroke: #5c5c5a; }
.dark .core { stroke: #b4b0a8; stroke-width: 1.200; }
.green path { stroke: #7bd52c; stroke-width: 4; }
.green .core { stroke: #bcdb98; stroke-width: 1.200; }
.green .one { stroke-width: 2; }
.single { fill: none; stroke: #565654; stroke-width: 1.800; }

.node {
  position: absolute; display: flex; align-items: center; border: 1px solid #222; border-radius: 3px; color: #1c1c1e;
  font-size: 6.700px; line-height: 12.270px; white-space: nowrap; box-shadow: 0 1px 1px rgba(0,0,0,.25);
}
.node ul { display: flex; flex-direction: column; }
.node li { height: 12.270px; position: relative; }
.node .ins { width: var(--in); text-align: right; flex: none; }
.node .ico { margin: 0 var(--g, 4px); }
.node .outs { flex: 1; }
.ins li::before, .outs li::after, .panel::before, .panel::after {
  content: ""; position: absolute; top: 3.500px; width: 3px; height: 6px; border: 1.200px solid #111; background: #e6e6e6;
}
.ins li::before, .panel::before { left: -3px; border-right: 0; border-radius: 3px 0 0 3px; }
.outs li::after, .panel::after { right: -3px; border-left: 0; border-radius: 0 3px 3px 0; }
.graft { position: absolute; left: 1px; top: 1px; }
.bold text { font-weight: bold; }
.grey, .legend { background: linear-gradient(#acabbb, #8b8a99); }
.grey { letter-spacing: -.2px; }
.white { background: linear-gradient(#ececec, #c6c6c6); }
.green.node { background: linear-gradient(#9aee50, #80d832); }
.deep { background: linear-gradient(#68cf26, #4cb210); border-color: #14400a; }
.green.node, .deep { color: #0c2604; }

.n-epw1 { left: 107px; top: 299px; width: 143px; height: 224px; --in: 29.500px; --g: 2.500px; }
.n-epw2 { left: 106px; top: 537.500px; width: 142px; height: 224px; --in: 28.500px; --g: 3px; }
.n-epw1 .outs, .n-epw2 .outs { padding-left: 1px; }
.n-url1 { left: -2px; top: 433.500px; width: 71px; height: 28px; --in: 19px; --g: 3.500px; }
.n-url2 { left: -2px; top: 641.500px; width: 55px; height: 28px; --in: 4px; --g: 3.500px; }
.n-url1 li::before, .n-url2 li::before { display: none; }
.n-legend { left: 947.500px; top: 616px; width: 124px; height: 110px; --in: 66px; --g: 2px; align-items: flex-start; }
.n-legend .outs { padding: 55px 0 0 1.500px; }
.n-legend .ico { margin-top: 55px; }
.n-legend .ins { padding-top: 1px; }
.n-graph { left: 1121px; top: 597.500px; width: 138px; height: 114px; --in: 62px; --g: 3px; }
.n-graph .outs { padding-left: .500px; }
.n-graph li:last-child { letter-spacing: -.12px; }
.n-input { left: 348px; top: 332px; width: 97px; height: 28px; --in: 41.500px; --g: 4px; }
.n-sort { left: 569px; top: 332px; width: 84px; height: 28px; --in: 30px; --g: 4px; letter-spacing: -.08px; }
.n-item1 { left: 901px; top: 332px; width: 62px; height: 40px; --in: 21px; --g: 2px; }
.n-item2 { left: 905.500px; top: 483px; width: 62px; height: 40px; --in: 21px; --g: 2px; }
.n-item1 .outs, .n-item2 .outs { padding-left: 3px; }
.n-rev { left: 753px; top: 481px; width: 53px; height: 18.500px; --in: 14px; --g: 4px; }
.n-rev .outs { padding-left: 0; }

.panel {
  position: absolute; width: 100px; height: 62px; border: 1px solid #1d5008; border-radius: 3px;
  background: #9aff38; color: #64b82a; font: 6.600px/9.900px "DejaVu Sans Mono", monospace; box-shadow: 0 1px 1px rgba(0,0,0,.3);
}
.panel::before, .panel::after { top: calc(50% - 3px); }
.panel h4 { height: 11px; border-bottom: 1.200px solid #235d0c; border-radius: 2px 2px 0 0; background: #7bd529; color: #0c3004; text-align: center; font: 6.700px/9.500px "Open Sans", sans-serif; }
.path { height: 10.500px; text-align: right; padding-right: 8px; background: #8fef30; position: relative; color: #55a822; line-height: 9px; }
.path::after { content: ""; position: absolute; right: 0; top: 0; width: 4.500px; height: 9px; border-radius: 2px; background: #4fa31a; }
.panel ol { background: linear-gradient(90deg, transparent 20px, #7fd82c 20px, #7fd82c 20.800px, transparent 20.800px); }
.panel li { display: flex; height: 9.900px; line-height: 9.500px; }
.panel li:nth-child(even) { background: rgba(125, 220, 35, .4); }
.panel b { width: 21px; padding-right: 3px; text-align: right; font-weight: normal; }
.short { width: 49px; height: 39.500px; }
.short ol { background: linear-gradient(90deg, transparent 8px, #7fd82c 8px, #7fd82c 8.800px, transparent 8.800px); }
.short b { width: 10px; }
.short .path::after { display: none; }
.mini { width: 20px; height: 25px; }
.mini h4 { letter-spacing: -.15px; }
.mini p { padding-left: 4px; }
.p-1 { left: 454px; top: 247.500px; }
.p-2 { left: 905px; top: 262px; }
.p-3 { left: 905.500px; top: 403px; height: 74px; }
.p-4 { left: 979px; top: 333px; }
.p-5 { left: 982.500px; top: 484px; width: 49.500px; }
.p-6 { left: 863px; top: 340px; }
.p-7 { left: 843px; top: 491px; }

.mru { position: absolute; left: 1px; top: 686px; width: 148px; height: 28px; display: flex; gap: 4px; padding: 1px 0 0 2px; border: 1px solid #000; background: linear-gradient(90deg, transparent 141px, #777 141px), linear-gradient(#f4f4f4, #a8a8a8); }
.mru span { width: 24px; height: 24px; flex: none; }
.mru .yellow { border: 1px solid #333; border-radius: 2px; background: #ffd23c; box-shadow: inset 0 0 0 1px #fff0a0; }
.mru .press { border: 1px solid #111; border-radius: 3px; background: linear-gradient(#ddd, #999); }

.status { height: 24px; flex: none; display: flex; justify-content: space-between; align-items: center; border-top: 3px solid #fff; padding: 1px 31px 0 7px; box-shadow: inset 0 1px #d9d9d9; }
.status .ver { font-family: "Liberation Sans", Arial, sans-serif; color: #666; letter-spacing: -.45px; }
.taskbar { height: 30px; flex: none; background: #101010; color: #fff; display: flex; align-items: center; }
.start { margin-left: 9px; }
.apps { margin-left: 527.500px; display: grid; grid-template-columns: repeat(7, 37px); height: 30px; }
.apps span { margin: 0 4.500px; display: flex; align-items: center; justify-content: center; }
.apps svg { width: 18px; height: 18px; }
.apps .run { border-bottom: 2px solid #76b9ed; padding-top: 2px; }
.apps .two { border-image: linear-gradient(90deg, #76b9ed 19px, #4a7398 19px) 2; }
.apps .current { margin: 0 .500px; background: #333; }
.tray { margin-left: auto; display: flex; align-items: center; height: 30px; }
.tray > svg:first-child { margin-right: 8px; }
.clock { width: 54px; display: flex; flex-direction: column; align-items: center; line-height: 14px; letter-spacing: -.42px; white-space: nowrap; }
.note { margin-left: 17px; }
.peek { width: 1px; height: 30px; background: #555; margin: 0 4px 0 19px; }
```
